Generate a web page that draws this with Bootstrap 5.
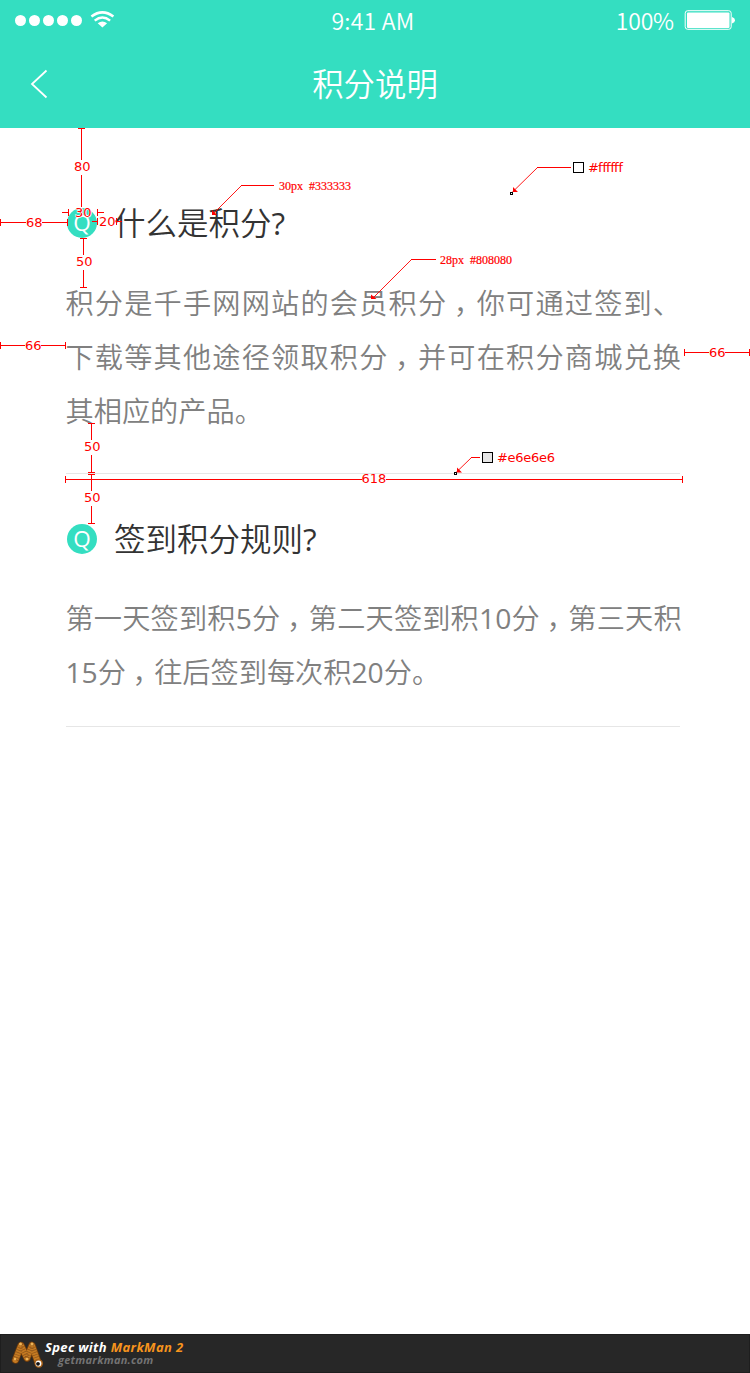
<!DOCTYPE html>
<html lang="zh-CN">
<head>
<meta charset="utf-8">
<meta name="viewport" content="width=device-width, initial-scale=1">
<title>积分说明</title>
<link href="https://cdn.jsdelivr.net/npm/bootstrap@5.3.0/dist/css/bootstrap.min.css" rel="stylesheet">
<style>
  body { background: #fff; }
  .screen { width: 750px; height: 1373px; overflow: hidden; }
  .teal { background: #34dec1; }
  .statusbar { height: 40px; font: 350 23px/40px "Noto Sans CJK SC", sans-serif; }
  .clock { margin-left: -2px; letter-spacing: .2px; }
  .power { letter-spacing: -.15px; }
  .titlebar { height: 88px; }
  .bar-title { font: 350 31.4px/86px "Noto Sans CJK SC", sans-serif; }
  .faq { padding: 73px 67px 0 66px; }
  .question { height: 44px; gap: 17px; padding-left: 1px; font: 350 31.5px/44px "Noto Sans CJK SC", sans-serif; color: #333; }
  .question > span:last-child { padding-bottom: 4px; }
  .q-dot { width: 30px; height: 30px; font: 400 22.5px/29px "Open Sans", sans-serif; }
  .answer { font: 350 28.2px/54px "Noto Sans CJK SC", sans-serif; color: #808080; transform: translate(-.5px, -1px); }
  .answer > div { height: 54px; white-space: nowrap; }
  .num { font-family: "Open Sans", sans-serif; font-weight: 400; line-height: 1; }
  .wide { letter-spacing: 1.18px; }
  .comma { font-feature-settings: "halt"; margin-left: .23em; margin-right: .27em; }
  .rule { width: 614px; height: 1px; background: #e6e6e6; }
  .footbar { height: 39px; background: #272727; border: 1px solid #1e1e1e; }
  .brand { font: italic 700 13px/13px "Open Sans", sans-serif; letter-spacing: .35px; }
  .brand-url { font: italic 700 11px/12px "Open Sans", sans-serif; color: #737373; padding-left: 13px; letter-spacing: .25px; }
  .orange { color: #f7941d; }
  .spec text { font: 13px "DejaVu Sans", sans-serif; fill: #f00; }
  .spec .tiny { font: 12px "Liberation Serif", serif; word-spacing: 3px; stroke: #f00; stroke-width: .2px; }
</style>
</head>
<body>
<div class="screen position-relative d-flex flex-column">
  <header class="teal text-white">
    <div class="statusbar position-relative d-flex justify-content-between align-items-center">
      <svg width="120" height="40" fill="#fff">
        <circle cx="20.5" cy="20.5" r="5.5"/><circle cx="34.5" cy="20.5" r="5.5"/><circle cx="48.5" cy="20.5" r="5.5"/><circle cx="62.5" cy="20.5" r="5.5"/><circle cx="76.5" cy="20.5" r="5.5"/>
        <g fill="none" stroke="#fff" stroke-width="2.5"><path d="M91.4 16.6Q102.4 8.2 113.4 16.6"/><path d="M94.7 20.6Q102.4 14.4 110.1 20.6"/></g>
        <path d="M97.7 23.3Q102.4 19.5 107.1 23.3L102.4 27.5Z"/>
      </svg>
      <span class="clock position-absolute start-50 translate-middle-x">9:41 AM</span>
      <div class="d-flex align-items-center">
        <span class="power pe-2">100%</span>
        <svg width="68" height="40" viewBox="682 0 68 40"><rect x="685.2" y="10.7" width="46" height="18.6" rx="2.5" fill="none" stroke="#fff" stroke-width="1"/><rect x="687" y="12.5" width="42.5" height="15.5" rx="1" fill="#fff"/><path d="M732 17q3 1 3 3.200t-3 3.200z" fill="#fff"/></svg>
      </div>
    </div>
    <div class="titlebar position-relative text-center">
      <svg class="position-absolute start-0 top-0" width="80" height="88" fill="none" stroke="#fff" stroke-width="1.8"><path d="M46.500 30.500L32 44L46.500 57.500"/></svg>
      <div class="bar-title">积分说明</div>
    </div>
  </header>

  <main class="faq flex-grow-1">
    <div class="question d-flex align-items-center"><span class="q-dot teal rounded-circle text-white text-center">Q</span><span>什么是积分<span class="num">?</span></span></div>
    <div class="answer" style="margin-top:31px">
      <div class="wide">积分是千手网网站的会员积分<span class="comma">，</span>你可通过签到、</div>
      <div class="wide">下载等其他途径领取积分<span class="comma">，</span>并可在积分商城兑换</div>
      <div>其相应的产品。</div>
    </div>
    <div class="rule" style="margin-top:35px"></div>
    <div class="question d-flex align-items-center" style="margin-top:43px"><span class="q-dot teal rounded-circle text-white text-center">Q</span><span>签到积分规则<span class="num">?</span></span></div>
    <div class="answer" style="margin-top:30px">
      <div style="letter-spacing:.18px">第一天签到积<span class="num">5</span>分<span class="comma">，</span>第二天签到积<span class="num">10</span>分<span class="comma">，</span>第三天积</div>
      <div><span class="num">15</span>分<span class="comma">，</span>往后签到每次积<span class="num">20</span>分。</div>
    </div>
    <div class="rule" style="margin-top:27px"></div>
  </main>

  <footer class="footbar d-flex align-items-start">
    <svg width="44" height="37" viewBox="1 1335 44 37" fill="none" stroke-linecap="round" stroke-linejoin="round">
      <path d="M15.500 1360L21 1345.500L27 1358L32 1345.500L38 1362.500" stroke="#6d3b0c" stroke-width="7.500"/>
      <path d="M15.500 1360L21 1345.500L27 1358L32 1345.500L38 1362.500" stroke="#c47a22" stroke-width="5.800"/>
      <path d="M15.500 1360L21 1345.500L27 1358L32 1345.500L38 1362.500" stroke="#8d541a" stroke-width="5.500" stroke-linecap="butt" stroke-dasharray=".7 1.800"/>
      <g fill="#f0b557"><circle cx="20.500" cy="1344" r="1.500"/><circle cx="32" cy="1344" r="1.500"/><circle cx="27" cy="1359" r="1.300"/><circle cx="15" cy="1359" r="1.200"/></g>
      <circle cx="38.800" cy="1363.500" r="4.200" fill="#a96219"/><circle cx="38.500" cy="1363.500" r="2.900" fill="#fff"/><circle cx="38" cy="1363.800" r="1.900" fill="#111"/>
    </svg>
    <div style="padding-top:6px"><div class="brand text-white">Spec with <span class="orange">MarkMan 2</span></div><div class="brand-url">getmarkman.com</div></div>
  </footer>

  <!-- dimension lines and callouts -->
  <svg class="spec position-absolute top-0 start-0" width="750" height="1373">
    <g fill="none" stroke="#f00" shape-rendering="crispEdges">
      <path d="M78 128.500h7M81.500 128v32M81.500 175v32"/>
      <path d="M.5 219v7M0 222.500h26M42 222.500h25M67.500 219v7"/>
      <path d="M62 212.500h6M68.500 209v7M97.500 209v7M98 212.500h6"/>
      <path d="M92 221.500h5M97.500 218v7M116.500 218v7M117 221.500h5"/>
      <path d="M80 238.500h7M83.500 238v17M83.500 270v17M80 287.500h7"/>
      <path d="M.5 342v7M0 345.500h25M41 345.500h25M65.500 342v7"/>
      <path d="M684.500 349v7M684 352.500h25M725 352.500h25M749.500 349v7"/>
      <path d="M88 423.500h7M91.500 423v17M91.500 455v17M88 472.500h7M88 474.500h7M91.500 474v17M91.500 506v17M88 523.500h7"/>
      <path d="M65.500 476v7M65 479.500h297M386 479.500h297M682.500 476v7"/>
      <path d="M241 185.500h33M411 259.500h25M537 167.500h34M471 457.500h9"/>
    </g>
    <g fill="none" stroke="#f00" stroke-width=".9"><path d="M241.500 185.500L213 214M411.500 259.500L373 298M537.500 167.500L512 192.500M471.500 457.500L456 472.500"/></g>
    <g fill="#f00"><path d="M212 210v5h5zM371 294.500v4.500h5.500zM513 187v5h5zM457 467.500v5h5z"/></g>
    <g fill="#fff" stroke="#000" shape-rendering="crispEdges"><rect x="573.500" y="162.500" width="10" height="10"/><rect x="482.500" y="452.500" width="10" height="10" fill="#e6e6e6"/><rect x="510.500" y="192.500" width="2" height="2"/><rect x="454.500" y="472.500" width="2" height="2"/></g>
    <text x="74" y="171">80</text><text x="75" y="216.500" stroke="#fff" stroke-width="1.500" paint-order="stroke">30</text>
    <text x="26" y="226.500">68</text><text x="99" y="225.500">20</text>
    <text x="76" y="266">50</text><text x="25" y="349.500">66</text><text x="709" y="356.500">66</text>
    <text x="84" y="451">50</text><text x="84" y="502">50</text><text x="361.500" y="483">618</text>
    <text x="588" y="172" textLength="35">#ffffff</text><text x="497" y="462" textLength="58">#e6e6e6</text>
    <text class="tiny" x="279" y="190">30px #333333</text><text class="tiny" x="440" y="264">28px #808080</text>
  </svg>
</div>
<script src="https://cdn.jsdelivr.net/npm/bootstrap@5.3.0/dist/js/bootstrap.bundle.min.js"></script>
</body>
</html>
